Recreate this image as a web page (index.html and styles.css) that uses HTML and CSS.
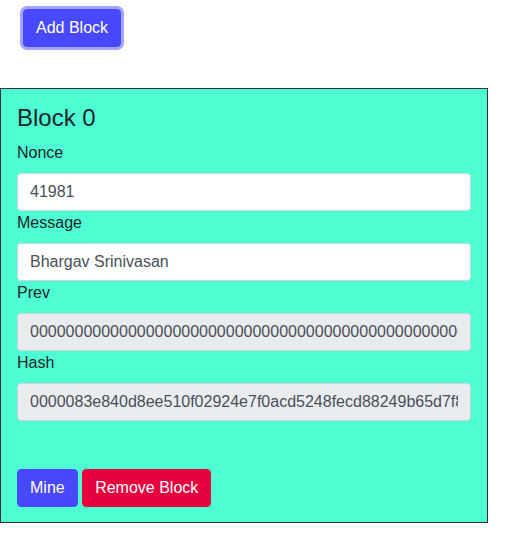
FILE: index.html
```html
<!DOCTYPE html>
<html>
<head>
<meta charset="utf-8">
<link rel="stylesheet" href="styles.css">
</head>
<body>
<div class="top">
  <button class="btn btn-blue btn-focus">Add Block</button>
</div>
<div class="card">
  <h4 class="title">Block 0</h4>
  <div class="group">
    <label class="lbl">Nonce</label>
    <input class="field" type="text" value="41981">
  </div>
  <div class="group">
    <label class="lbl">Message</label>
    <input class="field" type="text" value="Bhargav Srinivasan">
  </div>
  <div class="group">
    <label class="lbl">Prev</label>
    <input class="field" type="text" disabled value="0000000000000000000000000000000000000000000000000000000000000000">
  </div>
  <div class="group">
    <label class="lbl">Hash</label>
    <input class="field" type="text" disabled value="0000083e840d8ee510f02924e7f0acd5248fecd88249b65d7f8a1c2e9b3d4f60">
  </div>
  <div class="actions">
    <button class="btn btn-blue">Mine</button>
    <button class="btn btn-red">Remove Block</button>
  </div>
</div>
</body>
</html>
```
FILE: styles.css
```css
* { box-sizing: border-box; }
body {
  margin: 0;
  font-family: "Liberation Sans", Arial, sans-serif;
  font-size: 16px;
  line-height: 1.5;
  color: #212529;
  background: #fff;
}
.top {
  padding: 9px 0 0 23px;
  height: 47px;
}
.btn {
  display: inline-block;
  font-family: inherit;
  font-size: 16px;
  line-height: 24px;
  padding: 6px 12px;
  border: 1px solid transparent;
  border-radius: 4px;
  color: #fff;
  cursor: pointer;
  vertical-align: middle;
}
.btn-blue { background: #4848ff; border-color: #4848ff; }
.btn-red { background: #e6003e; border-color: #e6003e; }
.btn-focus { box-shadow: 0 0 0 3px rgba(72, 72, 255, 0.5); }
.card {
  margin-top: 41px;
  width: 488px;
  background: #4effd3;
  border: 1px solid #333;
  padding: 15px 16px 15px;
}
.title {
  margin: 0 0 8px;
  font-size: 24px;
  font-weight: 400;
  line-height: 1.2;
}
.lbl {
  display: inline-block;
  margin-bottom: 8px;
}
.field {
  display: block;
  width: 100%;
  height: 38px;
  padding: 6px 12px;
  font-family: inherit;
  font-size: 16px;
  line-height: 24px;
  color: #495057;
  background: #fff;
  border: 1px solid #ced4da;
  border-radius: 4px;
}
.field:disabled { background: #e9ecef; opacity: 1; }
.actions { margin-top: 48px; }
```
